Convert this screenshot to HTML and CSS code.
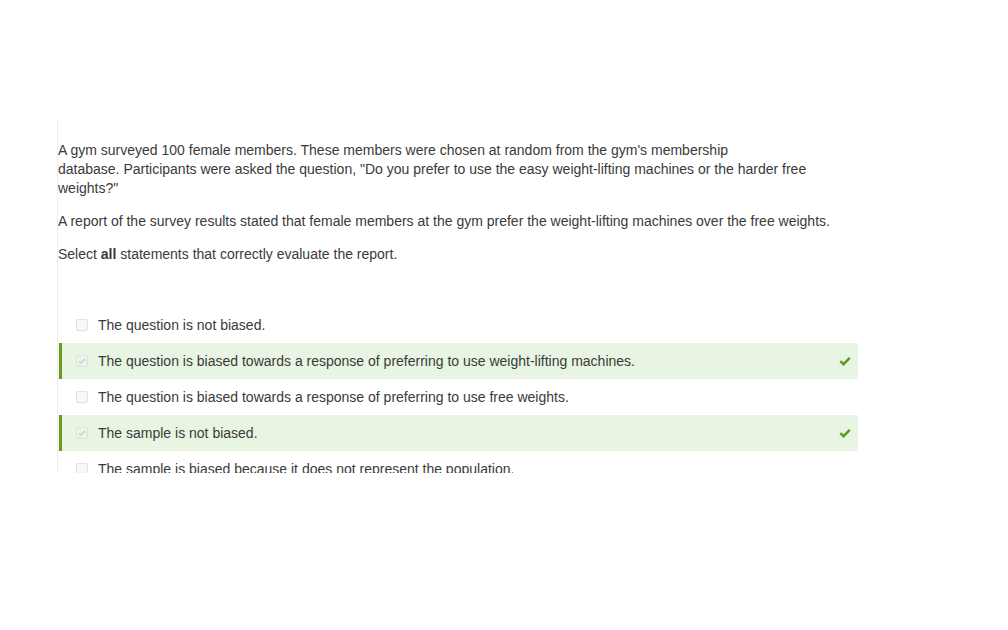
FILE: index.html
```html
<!DOCTYPE html>
<html lang="en">
  <head>
    <meta charset="UTF-8" />
    <meta name="viewport" content="width=device-width, initial-scale=1.0" />
    <title>Survey Question</title>
    <link rel="stylesheet" href="styles.css">
  </head>
  <body>
    <div class="question">
      <p>
        A gym surveyed 100 female members. These members were chosen at random from the gym's membership<br />
        database. Participants were asked the question, "Do you prefer to use the easy weight-lifting machines or the harder free weights?"
      </p>
      <p>A report of the survey results stated that female members at the gym prefer the weight-lifting machines over the free weights.</p>
      <p>Select <strong>all</strong> statements that correctly evaluate the report.</p>

      <ul class="options">
        <li class="option">
          <span class="box"></span>
          <span class="label">The question is not biased.</span>
        </li>
        <li class="option correct">
          <span class="box checked">
            <svg viewBox="0 0 12 12" width="10" height="10"><path d="M2.5 6.2 L4.8 8.4 L9.5 3.4" fill="none" stroke="#c8cec4" stroke-width="1.6" /></svg>
          </span>
          <span class="label">The question is biased towards a response of preferring to use weight-lifting machines.</span>
          <svg class="tick" viewBox="0 0 12 10" width="12" height="10"><path d="M1.3 5.2 L4.5 8.2 L10.8 1.8" fill="none" stroke="#5c9a1b" stroke-width="2.4" /></svg>
        </li>
        <li class="option">
          <span class="box"></span>
          <span class="label">The question is biased towards a response of preferring to use free weights.</span>
        </li>
        <li class="option correct">
          <span class="box checked">
            <svg viewBox="0 0 12 12" width="10" height="10"><path d="M2.5 6.2 L4.8 8.4 L9.5 3.4" fill="none" stroke="#c8cec4" stroke-width="1.6" /></svg>
          </span>
          <span class="label">The sample is not biased.</span>
          <svg class="tick" viewBox="0 0 12 10" width="12" height="10"><path d="M1.3 5.2 L4.5 8.2 L10.8 1.8" fill="none" stroke="#5c9a1b" stroke-width="2.4" /></svg>
        </li>
        <li class="option">
          <span class="box"></span>
          <span class="label">The sample is biased because it does not represent the population.</span>
        </li>
      </ul>
    </div>
  </body>
</html>
```
FILE: styles.css
```css
body {
  margin: 0;
  padding: 0;
  background: #fff;
  font-family: "Liberation Sans", Arial, sans-serif;
  font-size: 14px;
  color: #3a3a3a;
}
.question {
  margin: 120px 0 0 57px;
  width: 801px;
  height: 353px;
  overflow: hidden;
  border-left: 1px solid #ececec;
  padding-top: 21px;
  box-sizing: border-box;
}
.question p {
  margin: 0 0 14px 0;
  line-height: 19px;
}
.question strong {
  font-weight: bold;
}
.options {
  list-style: none;
  margin: 43px 0 0 0;
  padding: 0;
}
.option {
  display: flex;
  align-items: center;
  height: 36px;
  margin-left: 1px;
  border-left: 3px solid transparent;
  padding-left: 14px;
  padding-right: 7px;
}
.option.correct {
  background: #e9f5e3;
  border-left-color: #6b9b1e;
}
.box {
  width: 10px;
  height: 10px;
  border: 1px solid #e2e2e2;
  border-radius: 2px;
  background: #f7f7f7;
  margin-right: 10px;
  display: flex;
  align-items: center;
  justify-content: center;
}
.box.checked {
  background: #eef2ec;
  border-color: #dde3da;
}
.label {
  flex: 1;
  line-height: 19px;
}
.tick {
  flex: none;
}
```
